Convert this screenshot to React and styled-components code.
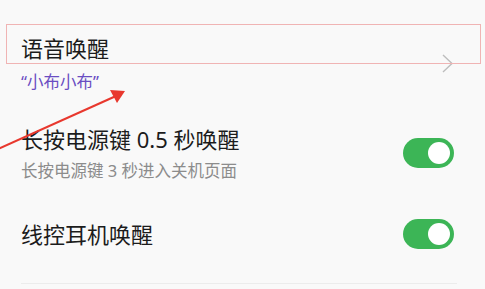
import React from 'react';
import styled, { createGlobalStyle } from 'styled-components';

const Global = createGlobalStyle`
  html, body {
    margin: 0;
    padding: 0;
    background: #f9f9f9;
  }
  body {
    font-family: "Noto Sans", "Noto Sans CJK SC", sans-serif;
  }
`

const Page = styled.div`
  position: relative;
  width: 485px;
  height: 289px;
  overflow: hidden;
  background: #f9f9f9;
`

const List = styled.div`
  display: flex;
  flex-direction: column;
  padding: 0 28px 0 21px;
`

const Row = styled.div`
  display: flex;
  align-items: center;
  justify-content: space-between;
  padding: ${props => props.pad};
  border-bottom: ${props => props.last ? '1px solid #ececec' : 'none'};
`

const Texts = styled.div`
  display: flex;
  flex-direction: column;
`

const Title = styled.div`
  font-size: 22px;
  line-height: 30px;
  color: #1c1c1c;
`

const Sub = styled.div`
  font-size: 16.5px;
  line-height: 22px;
  margin-top: ${props => props.gap}px;
  color: ${props => props.accent ? '#6a4dc2' : '#8c8c8c'};
`

const Switch = styled.div`
  width: 51px;
  height: 30px;
  margin-right: 3px;
  border-radius: 15px;
  background: #3cb556;
  display: flex;
  align-items: center;
  justify-content: flex-end;
  padding-right: 4px;
  box-sizing: border-box;
  flex-shrink: 0;

  &::after {
    content: '';
    width: 22px;
    height: 22px;
    border-radius: 50%;
    background: #ffffff;
  }
`

const Chevron = styled.svg`
  width: 11px;
  height: 19px;
  margin-right: 4px;
  flex-shrink: 0;
`

const Highlight = styled.div`
  position: absolute;
  left: 6px;
  top: 24px;
  width: 475px;
  height: 40px;
  box-sizing: border-box;
  border: 1px solid #f0b4b4;
  pointer-events: none;
`

const Arrow = styled.svg`
  position: absolute;
  left: 0;
  top: 0;
  width: 485px;
  height: 289px;
  pointer-events: none;
`

const App = () => {
  return (
    <Page>
      <Global />
      <List>
        <Row pad="33px 0 15px">
          <Texts>
            <Title>语音唤醒</Title>
            <Sub accent gap={8}>“小布小布”</Sub>
          </Texts>
          <Chevron viewBox="0 0 11 19">
            <path d="M1 1 L10 9.5 L1 18" fill="none" stroke="#bdbdbd" strokeWidth="1.4" />
          </Chevron>
        </Row>
        <Row pad="16px 0 17px">
          <Texts>
            <Title>长按电源键 0.5 秒唤醒</Title>
            <Sub gap={6}>长按电源键 3 秒进入关机页面</Sub>
          </Texts>
          <Switch />
        </Row>
        <Row pad="20px 0 34px" last>
          <Texts>
            <Title>线控耳机唤醒</Title>
          </Texts>
          <Switch />
        </Row>
      </List>

      <Highlight />
      <Arrow viewBox="0 0 485 289">
        <line x1="-2" y1="149" x2="116" y2="96" stroke="#e8382e" strokeWidth="2.2" />
        <polygon points="125,91 110,90 117,103" fill="#e8382e" />
      </Arrow>
    </Page>
  );
}

export default App
